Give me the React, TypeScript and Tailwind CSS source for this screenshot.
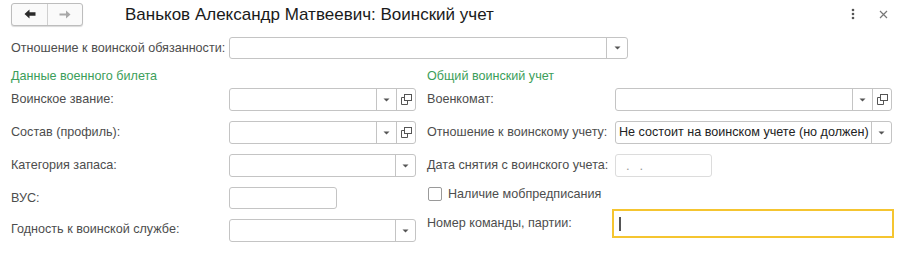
import React from "react";

const font = { fontFamily: '"Liberation Sans", Arial, sans-serif' };

function Arrow() {
  return (
    <svg width="7" height="4" viewBox="0 0 7 4">
      <path d="M0.5 0.5 L6.5 0.5 L3.5 3.5 Z" fill="#555" />
    </svg>
  );
}

function CopyIcon() {
  return (
    <svg width="11" height="11" viewBox="0 0 11 11">
      <rect x="3.5" y="0.5" width="7" height="6" fill="none" stroke="#555" strokeWidth="1" />
      <path d="M3.5 3.5 H0.5 V10.5 H6.5 V6.5" fill="none" stroke="#555" strokeWidth="1" />
    </svg>
  );
}

function Field({
  w,
  h = 23,
  dropdown,
  copy,
  value,
  dropW = 20,
  copyW = 19,
}: {
  w: number;
  h?: number;
  dropdown?: boolean;
  copy?: boolean;
  value?: string;
  dropW?: number;
  copyW?: number;
}) {
  return (
    <div
      className="flex border border-[#c4c4c4] rounded-[3px] bg-white shrink-0"
      style={{ width: w, height: h }}
    >
      <div className="flex-1 flex items-center pl-[3px] text-[12.6px] text-[#222] overflow-hidden whitespace-nowrap">
        {value}
      </div>
      {dropdown && (
        <div
          className="flex items-center justify-center border-l border-[#c4c4c4]"
          style={{ width: dropW }}
        >
          <Arrow />
        </div>
      )}
      {copy && (
        <div
          className="flex items-center justify-center border-l border-[#c4c4c4]"
          style={{ width: copyW }}
        >
          <CopyIcon />
        </div>
      )}
    </div>
  );
}

const lbl = "text-[12.6px] text-[#4d4d4d] whitespace-nowrap";

export default function App() {
  return (
    <div className="w-[900px] h-[253px] bg-white relative overflow-hidden" style={font}>
      {/* Header */}
      <div className="flex items-center h-[28px]">
        <div className="ml-[11px] flex h-[23px] w-[72px] border border-[#bdbdbd] rounded-[3px] bg-[#fafafa] shadow-[0_1px_1px_rgba(0,0,0,0.15)]">
          <div className="w-[36px] flex items-center justify-center border-r border-[#d0d0d0]">
            <svg width="12" height="10" viewBox="0 0 12 10">
              <path d="M0.5 5 L5.5 0.5 L5.5 3.3 L11.5 3.3 L11.5 6.7 L5.5 6.7 L5.5 9.5 Z" fill="#2a2a2a" />
            </svg>
          </div>
          <div className="flex-1 flex items-center justify-center">
            <svg width="12" height="9" viewBox="0 0 12 9">
              <path d="M11.5 4.5 L7 0.5 L7 3.5 L0.5 3.5 L0.5 5.5 L7 5.5 L7 8.5 Z" fill="#a8a8a8" />
            </svg>
          </div>
        </div>
        <div className="ml-[42px] text-[17px] text-[#1a1a1a] leading-none">
          Ваньков Александр Матвеевич: Воинский учет
        </div>
        <div className="ml-auto flex items-center">
          <svg width="4" height="12" viewBox="0 0 4 12" className="mr-[24px]">
            <circle cx="2" cy="2" r="1.3" fill="#555" />
            <circle cx="2" cy="6" r="1.3" fill="#555" />
            <circle cx="2" cy="10" r="1.3" fill="#555" />
          </svg>
          <svg width="9" height="9" viewBox="0 0 9 9" className="mr-[12px]">
            <path d="M1 1 L8 8 M8 1 L1 8" stroke="#777" strokeWidth="1.2" />
          </svg>
        </div>
      </div>

      {/* Row 1 */}
      <div className="flex items-center mt-[9px] pl-[11px] h-[22px]">
        <div className={`w-[218px] ${lbl}`}>Отношение к воинской обязанности:</div>
        <Field w={399} h={22} dropdown dropW={21} />
      </div>

      {/* Columns */}
      <div className="flex mt-[7px] pl-[11px]">
        {/* Left */}
        <div className="flex flex-col w-[405px]">
          <div className="h-[20px] flex items-center text-[12.6px] text-[#3c9e5a]">
            Данные военного билета
          </div>
          <div className="flex flex-col gap-[10px] mt-[2px]">
            <div className="flex items-center">
              <div className={`w-[218px] ${lbl}`}>Воинское звание:</div>
              <Field w={187} dropdown copy />
            </div>
            <div className="flex items-center">
              <div className={`w-[218px] ${lbl}`}>Состав (профиль):</div>
              <Field w={187} dropdown copy />
            </div>
            <div className="flex items-center">
              <div className={`w-[218px] ${lbl}`}>Категория запаса:</div>
              <Field w={187} dropdown />
            </div>
            <div className="flex items-center">
              <div className={`w-[218px] ${lbl}`}>ВУС:</div>
              <Field w={108} h={22} />
            </div>
            <div className="flex items-start">
              <div className={`w-[218px] pt-[1px] ${lbl}`}>Годность к воинской службе:</div>
              <Field w={187} dropdown />
            </div>
          </div>
        </div>

        {/* Right */}
        <div className="flex flex-col ml-[11px]">
          <div className="h-[20px] flex items-center text-[12.6px] text-[#3c9e5a]">
            Общий воинский учет
          </div>
          <div className="flex flex-col mt-[2px]">
            <div className="flex items-center">
              <div className={`w-[188px] ${lbl}`}>Военкомат:</div>
              <Field w={277} dropdown copy />
            </div>
            <div className="flex items-center mt-[10px]">
              <div className={`w-[188px] ${lbl}`}>Отношение к воинскому учету:</div>
              <Field w={277} dropdown value="Не состоит на воинском учете (но должен)" />
            </div>
            <div className="flex items-center mt-[10px]">
              <div className={`w-[188px] ${lbl}`}>Дата снятия с воинского учета:</div>
              <div className="w-[97px] h-[23px] border border-[#dcdcdc] rounded-[3px] flex items-center pl-[10px] text-[13px] text-[#999] tracking-[10px]">
                ..
              </div>
            </div>
            <div className="flex items-center mt-[8px] h-[18px]">
              <div className="w-[14px] h-[14px] border border-[#9a9a9a] rounded-[2px] bg-white ml-[1px]" />
              <div className={`ml-[6px] ${lbl}`}>Наличие мобпредписания</div>
            </div>
            <div className="flex items-center mt-[6px]">
              <div className={`w-[185px] ${lbl}`}>Номер команды, партии:</div>
              <div className="w-[282px] h-[29px] border-2 border-[#f5c530] flex items-center pl-[5px]">
                <div className="w-[2px] h-[14px] bg-[#555]" />
              </div>
            </div>
          </div>
        </div>
      </div>
    </div>
  );
}
